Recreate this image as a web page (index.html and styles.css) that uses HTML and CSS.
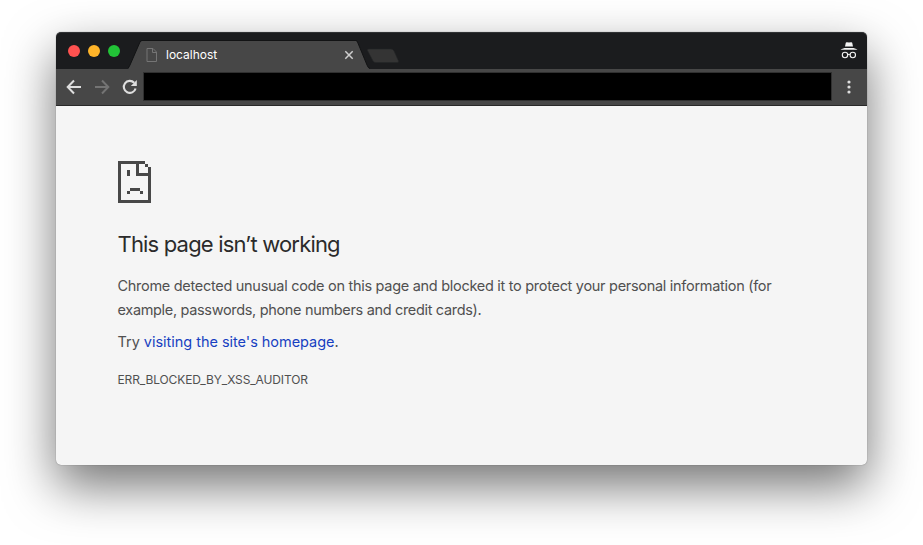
FILE: index.html
```html
<!DOCTYPE html>
<html lang="en">
<head>
<meta charset="utf-8">
<title>localhost</title>
<link rel="stylesheet" href="styles.css">
</head>
<body>
<div class="window">
  <header class="tabstrip">
    <div class="lights"><i class="light red"></i><i class="light yellow"></i><i class="light green"></i></div>
    <div class="tab">
      <svg class="tab-shape" width="243" height="29" viewBox="0 0 243 29"><path d="M0 29Q1 27 2 25L12 2Q12.500 1 14 1H228Q229 1 229.500 2L239 25Q240 28 242 29Z" fill="#474747"/><path d="M0 28.500Q1 27 2 25L12 2Q12.500 .5 14 .5H228Q229 .5 229.500 2L239 25Q240 28 242 28.500" fill="none" stroke="#121314"/></svg>
      <svg class="file-icon" width="12" height="14" viewBox="0 0 12 14"><path d="M1 .5H7L10.500 4V13.500H1ZM6.500 .5V4.500H10.500" fill="none" stroke="#757575"/></svg>
      <span class="tab-title">localhost</span>
      <svg class="close" width="10" height="10" viewBox="0 0 10 10"><path d="M1.300 1.300 8.700 8.700M8.700 1.300 1.300 8.700" stroke="#cfcfcf" stroke-width="1.500"/></svg>
    </div>
    <svg class="new-tab" width="34" height="16" viewBox="0 0 34 16"><path d="M2.500 1H25Q27 1 28 3L32.500 13Q33 14.500 31 14.500H10Q8 14.500 7 13L1.500 2.500Q1 1 2.500 1Z" fill="#343434" stroke="#242526" stroke-width=".6"/></svg>
    <svg class="incognito" width="18" height="18" viewBox="0 0 18 18"><path d="M5 4.500 5.800 .8Q6 0 7 .2L9 .6 11 .2Q12 0 12.200 .8L13 4.500ZM.5 7.700Q1 7.200 4.500 6H13.500Q17 7.200 17.500 7.700Z" fill="#f3f3f3"/><g fill="none" stroke="#f3f3f3" stroke-width="1.100"><circle cx="5" cy="13" r="2.700"/><circle cx="12.800" cy="13" r="2.700"/><path d="M7.700 12.700Q9 11.700 10.100 12.700"/></g></svg>
  </header>
  <nav class="toolbar">
    <svg class="nav-icon" width="16" height="16" viewBox="0 0 16 16"><path d="M15 8H2M8 1.500 1.700 8 8 14.500" fill="none" stroke="#dedede" stroke-width="2"/></svg>
    <svg class="nav-icon forward" width="16" height="16" viewBox="0 0 16 16"><path d="M1 8H14M8 1.500 14.300 8 8 14.500" fill="none" stroke="#747474" stroke-width="2"/></svg>
    <svg class="nav-icon reload" width="16" height="16" viewBox="0 0 16 16"><path d="M12.200 3.800A6 6 0 1 0 13.600 9.500" fill="none" stroke="#dedede" stroke-width="2.100"/><path d="M14.800 1V7H8.800Z" fill="#dedede"/></svg>
    <div class="address"></div>
    <svg class="menu" width="4" height="14" viewBox="0 0 4 14" fill="#dedede"><circle cx="2" cy="2" r="1.600"/><circle cx="2" cy="7" r="1.600"/><circle cx="2" cy="12" r="1.600"/></svg>
  </nav>
  <main class="page">
    <svg class="sad" width="33" height="42" viewBox="0 0 33 42" shape-rendering="crispEdges"><path fill="#484848" d="M0 0H27V3H30V6H33V42H0ZM3 3V39H30V15H18V3ZM21 3V12H30V6H27V3ZM9 9H12V15H9ZM12 27H22V30H25V33H22V30H12V33H9V30H12Z" fill-rule="evenodd"/></svg>
    <h1>This page isn’t working</h1>
    <p class="message"><span class="line one">Chrome detected unusual code on this page and blocked it to protect your personal information (for</span> <span class="line two">example, passwords, phone numbers and credit cards).</span></p>
    <p class="try">Try <a>visiting the site's homepage</a>.</p>
    <div class="code">ERR_BLOCKED_BY_XSS_AUDITOR</div>
  </main>
</div>
</body>
</html>
```
FILE: styles.css
```css
* { box-sizing: border-box; }
body { margin: 0; padding: 32px 56px; height: 545px; overflow: hidden; background: #fff; font-family: Inter, "Liberation Sans", sans-serif; }
svg { display: block; flex: none; }
.window { width: 811px; height: 433px; border-radius: 5px; background: #f5f5f5; box-shadow: 0 0 1px rgba(0,0,0,.55), 0 21px 50px rgba(0,0,0,.55); }
.tabstrip { height: 37px; display: flex; background: #1b1c1e; border-radius: 5px 5px 0 0; border-top: 1px solid #303234; }
.lights { display: flex; gap: 8px; padding: 12px 0 0 12px; width: 72px; }
.light { width: 12px; height: 12px; border-radius: 50%; flex: none; }
.red { background: #ff5250; }
.yellow { background: #ffb429; }
.green { background: #22c337; }
.tab { position: relative; display: flex; align-items: center; width: 243px; height: 29px; margin-top: 7px; padding-left: 18px; }
.tab-shape { position: absolute; left: 0; top: 0; }
.file-icon, .tab-title, .close { position: relative; }
.tab-title { margin-left: 8px; width: 178px; font-size: 12px; line-height: 16px; color: #fff; }
.new-tab { margin: 15px 0 0 -5px; }
.incognito { margin: 9px 9px 0 auto; }
.toolbar { height: 37px; display: flex; align-items: center; background: #474747; border-bottom: 1px solid #292929; padding-left: 10px; }
.forward { margin-left: 12px; }
.reload { margin-left: 12px; }
.address { width: 689px; height: 29px; margin: 0 0 1px 5px; background: #000; border: 1px solid #303030; }
.menu { margin-left: 15px; }
.page { padding: 55px 62px 0; color: #505050; }
h1 { margin: 26px 0 0 -.5px; font-size: 22px; line-height: 30px; font-weight: 400; color: #2b2b2b; letter-spacing: -.82px; }
p { margin: 0 0 0 -.5px; font-size: 14.500px; line-height: 24px; }
.message { margin-top: 15px; }
.line { display: block; white-space: nowrap; }
.one { letter-spacing: -.293px; }
.two { letter-spacing: -.33px; }
.try { margin-top: 8px; letter-spacing: -.03px; }
a { color: #173fc1; }
.code { margin: 18px 0 0 -.5px; font-size: 12px; line-height: 16px; letter-spacing: -.13px; }
```
